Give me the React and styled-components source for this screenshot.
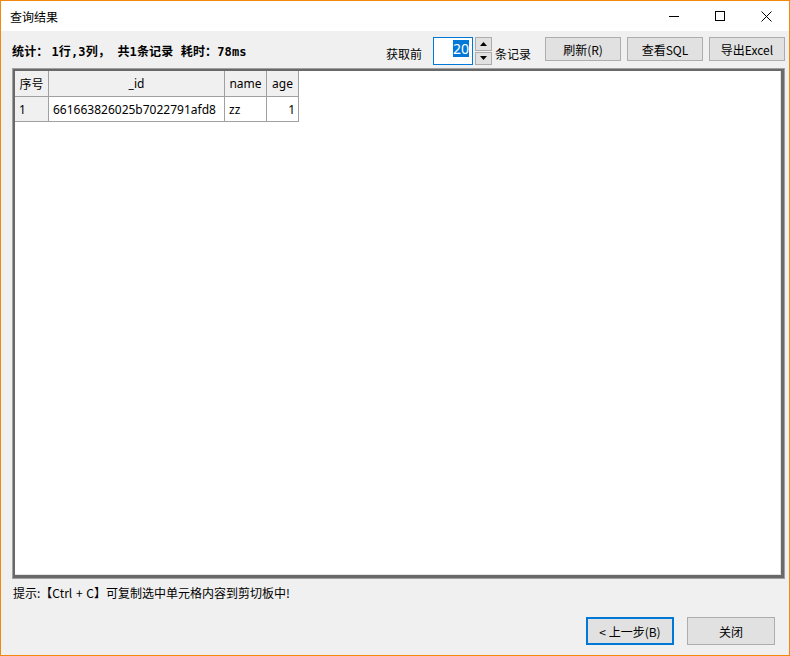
import React from "react";
import styled, { createGlobalStyle } from "styled-components";

const Global = createGlobalStyle`
  html, body { margin: 0; padding: 0; background: #fff; }
  body { font-family: "Noto Sans", "Noto Sans CJK SC", sans-serif; font-size: 12px; color: #000; }
`;

const Window = styled.div`
  width: 790px;
  height: 656px;
  box-sizing: border-box;
  border: 1px solid #f2890d;
  display: flex;
  flex-direction: column;
  background: #f0f0f0;
`;

const TitleBar = styled.div`
  height: 30px;
  background: #fff;
  display: flex;
  align-items: center;
`;

const Title = styled.div`
  padding-left: 9px;
  font-family: "Noto Sans CJK SC", sans-serif;
  font-size: 12px;
  flex: 1;
`;

const CtlButton = styled.div`
  width: 46px;
  height: 30px;
  display: flex;
  align-items: center;
  justify-content: center;
`;

const Body = styled.div`
  flex: 1;
  display: flex;
  flex-direction: column;
  padding: 0 4px 10px 11px;
`;

const Toolbar = styled.div`
  height: 37px;
  display: flex;
  align-items: flex-start;
`;

const Stats = styled.div`
  margin-top: 13px;
  line-height: 16px;
  font-family: "DejaVu Sans Mono", "Noto Sans CJK SC", monospace;
  font-weight: bold;
  font-size: 12px;
  letter-spacing: 0.15px;
`;

const StatGap = styled.span`
  margin-left: 3px;
`;

const RightGroup = styled.div`
  margin-left: auto;
  display: flex;
  align-items: flex-start;
`;

const Label = styled.div`
  margin-top: 15px;
  line-height: 16px;
  font-family: "Noto Sans CJK SC", sans-serif;
  margin-right: ${(p) => p.$gap || 0}px;
`;

const SpinInput = styled.div`
  margin-top: 6px;
  width: 40px;
  height: 28px;
  box-sizing: border-box;
  border: 1px solid #0078d7;
  background: #fff;
  display: flex;
  justify-content: flex-end;
  align-items: flex-start;
  padding: 2px 3px 0 0;
`;

const Selected = styled.span`
  background: #0078d7;
  color: #fff;
  font-size: 14px;
  line-height: 17px;
`;

const Spinner = styled.div`
  margin: 6px 3px 0 2px;
  width: 17px;
  height: 28px;
  display: flex;
  flex-direction: column;
  gap: 1px;
`;

const SpinBtn = styled.div`
  flex: 1;
  box-sizing: border-box;
  border: 1px solid #adadad;
  background: #e1e1e1;
  display: flex;
  align-items: center;
  justify-content: center;
`;

const Button = styled.div`
  box-sizing: border-box;
  width: ${(p) => p.$w || 76}px;
  height: ${(p) => p.$h || 24}px;
  margin-top: ${(p) => p.$top || 0}px;
  margin-left: ${(p) => p.$left || 0}px;
  border: ${(p) => (p.$focus ? "2px solid #0078d7" : "1px solid #adadad")};
  background: #e1e1e1;
  display: flex;
  align-items: center;
  justify-content: center;
  font-family: "Noto Sans CJK SC", sans-serif;
  font-size: 12px;
`;

const Grid = styled.div`
  height: 511px;
  box-sizing: border-box;
  border: 1px solid #a0a0a0;
  display: flex;
`;

const GridInner = styled.div`
  flex: 1;
  border: 2px solid #696969;
  border-right-width: 3px;
  border-bottom-width: 3px;
  box-shadow: inset -1px -1px 0 #e3e3e3;
  background: #fff;
`;

const Table = styled.table`
  width: 284px;
  border-collapse: separate;
  border-spacing: 0;
  table-layout: fixed;
  font-family: "Noto Sans", sans-serif;
  font-size: 12px;
`;

const Col = styled.col`
  width: ${(p) => p.$w}px;
`;

const Th = styled.th`
  box-sizing: border-box;
  height: 26px;
  padding: 0;
  background: #f0f0f0;
  border-right: 1px solid #a0a0a0;
  border-bottom: 1px solid #a0a0a0;
  font-weight: normal;
  text-align: center;
  font-family: "Noto Sans", "Noto Sans CJK SC", sans-serif;
`;

const Td = styled.td`
  box-sizing: border-box;
  height: 25px;
  padding: 0 ${(p) => (p.$right ? 3 : 0)}px 0 ${(p) => (p.$right ? 0 : 4)}px;
  border-right: 1px solid #a0a0a0;
  border-bottom: 1px solid #a0a0a0;
  background: ${(p) => (p.$head ? "#f0f0f0" : "#fff")};
  text-align: ${(p) => (p.$right ? "right" : "left")};
  white-space: nowrap;
  overflow: hidden;
`;

const Hint = styled.div`
  margin-top: 6px;
  line-height: 16px;
  font-family: "Noto Sans CJK SC", sans-serif;
  padding-left: 1px;
  word-spacing: 1px;
`;

const Footer = styled.div`
  margin-top: 16px;
  display: flex;
  justify-content: flex-end;
  padding-right: 10px;
  gap: 13px;
`;

const App = () => {
  return (
    <>
      <Global />
      <Window>
        <TitleBar>
          <Title>查询结果</Title>
          <CtlButton>
            <svg width="10" height="10" viewBox="0 0 10 10">
              <path d="M0 5.5h10" stroke="#000" strokeWidth="1" />
            </svg>
          </CtlButton>
          <CtlButton>
            <svg width="10" height="10" viewBox="0 0 10 10">
              <rect x="0.5" y="0.5" width="9" height="9" fill="none" stroke="#000" />
            </svg>
          </CtlButton>
          <CtlButton>
            <svg width="11" height="11" viewBox="0 0 11 11">
              <path d="M0.5 0.5l10 10M10.5 0.5l-10 10" stroke="#000" strokeWidth="1" />
            </svg>
          </CtlButton>
        </TitleBar>
        <Body>
          <Toolbar>
            <Stats>
              统计：<StatGap>1行,3列， 共1条记录 耗时：78ms</StatGap>
            </Stats>
            <RightGroup>
              <Label $gap={11}>获取前</Label>
              <SpinInput>
                <Selected>20</Selected>
              </SpinInput>
              <Spinner>
                <SpinBtn>
                  <svg width="7" height="4" viewBox="0 0 7 4">
                    <path d="M3.5 0L7 4H0z" fill="#000" />
                  </svg>
                </SpinBtn>
                <SpinBtn>
                  <svg width="7" height="4" viewBox="0 0 7 4">
                    <path d="M0 0h7L3.5 4z" fill="#000" />
                  </svg>
                </SpinBtn>
              </Spinner>
              <Label $gap={14}>条记录</Label>
              <Button $top={6}>刷新(R)</Button>
              <Button $top={6} $left={6}>查看SQL</Button>
              <Button $top={6} $left={6}>导出Excel</Button>
            </RightGroup>
          </Toolbar>
          <Grid>
            <GridInner>
              <Table>
                <colgroup>
                  <Col $w={34} />
                  <Col $w={176} />
                  <Col $w={42} />
                  <Col $w={32} />
                </colgroup>
                <thead>
                  <tr>
                    <Th>序号</Th>
                    <Th>_id</Th>
                    <Th>name</Th>
                    <Th>age</Th>
                  </tr>
                </thead>
                <tbody>
                  <tr>
                    <Td $head>1</Td>
                    <Td>661663826025b7022791afd8</Td>
                    <Td>zz</Td>
                    <Td $right>1</Td>
                  </tr>
                </tbody>
              </Table>
            </GridInner>
          </Grid>
          <Hint>提示:【Ctrl + C】可复制选中单元格内容到剪切板中!</Hint>
          <Footer>
            <Button $w={88} $h={28} $focus>&lt; 上一步(B)</Button>
            <Button $w={88} $h={28}>关闭</Button>
          </Footer>
        </Body>
      </Window>
    </>
  );
};

export default App;
